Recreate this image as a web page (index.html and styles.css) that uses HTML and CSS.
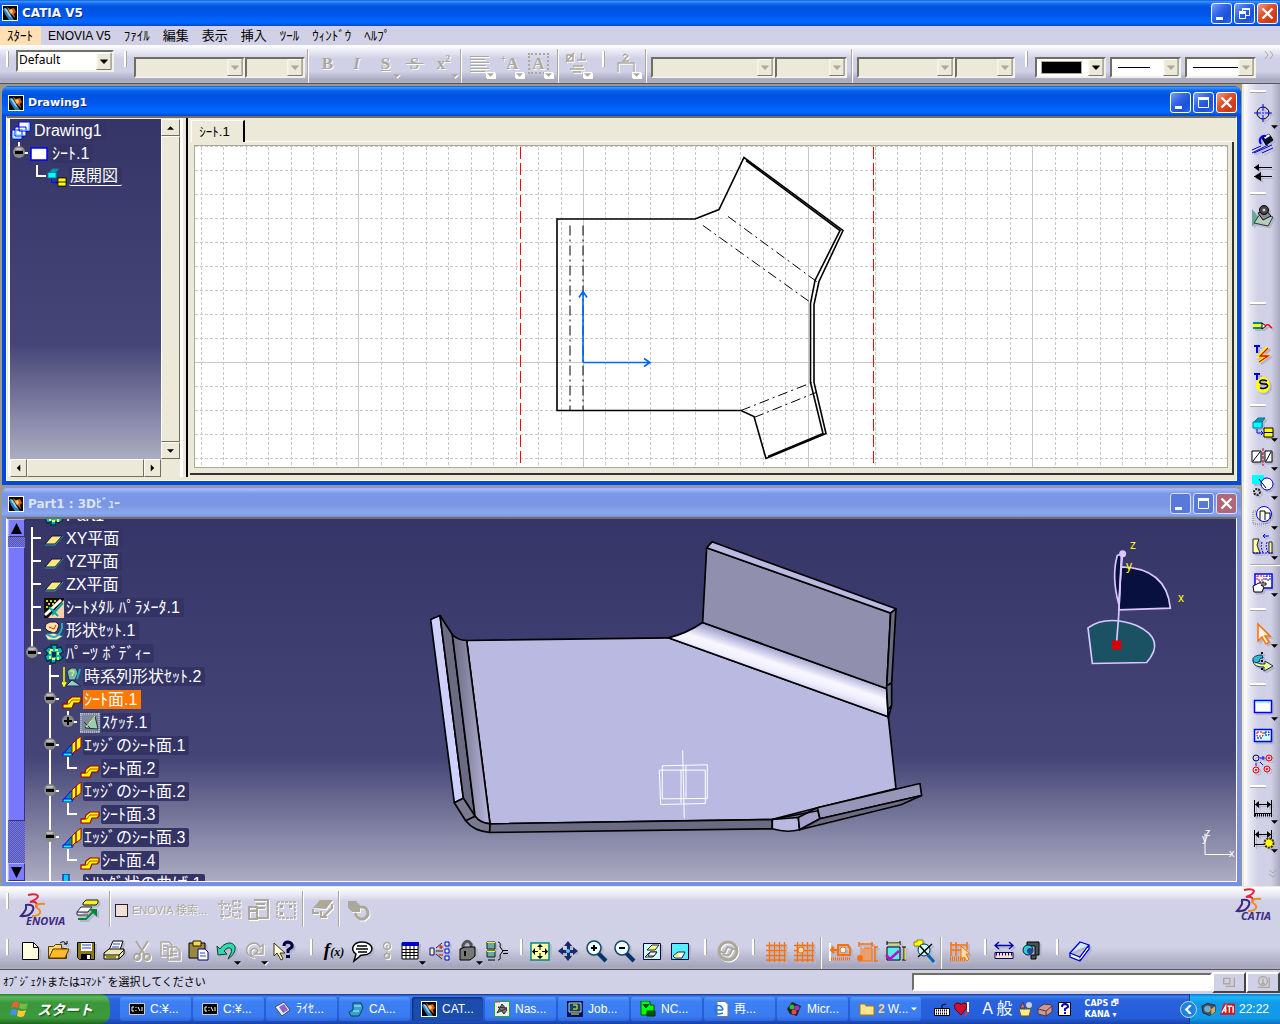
FILE: index.html
```html
<!DOCTYPE html>
<html lang="ja">
<head>
<meta charset="utf-8">
<title>CATIA V5</title>
<link rel="stylesheet" href="styles.css">
</head>
<body>
<svg class="defs" aria-hidden="true">
  <defs>
    <symbol id="app" viewBox="0 0 16 16"><path fill="#fff" d="M0 0h16v16H0z"/><path fill="#080404" d="M1 1h14v14H1z"/><path d="M1 4l3-1 8 12H7L3 9z" fill="#2a7cc8"/><path d="M2 3l3 1 5 9-3-2z" fill="#8cd8f0"/><path d="M5 2l3 2 4-1 2 4-2 2 1 4-3-3-3-3z" fill="#d06018"/><path d="M7 5l3-1 1 3-2 2z" fill="#ffc860"/></symbol>
    <symbol id="w-min" viewBox="0 0 21 21"><path fill="#fff" d="M5 14h7v3H5z"/></symbol>
    <symbol id="w-max" viewBox="0 0 21 21"><path fill="none" stroke="#fff" d="M5.500 5.500h10v10h-10z"/><path fill="#fff" d="M5 5h11v3H5z"/></symbol>
    <symbol id="w-res" viewBox="0 0 21 21"><path fill="none" stroke="#fff" d="M8.500 8V5.500h7v7H12M5.500 9.500h6v6h-6z"/><path fill="#fff" d="M8 5h8v2H8zM5 8h7v3H5z"/></symbol>
    <symbol id="w-close" viewBox="0 0 21 21"><path stroke="#fff" stroke-width="2.400" d="M5.500 5.500l10 10M15.500 5.500l-10 10"/></symbol>
    <symbol id="arrow" viewBox="0 0 16 18"><path fill="#ece9d8" d="M0 0h16v18H0z"/><path fill="none" stroke="#fff" d="M.5 18V.5H16"/><path fill="none" stroke="#716f64" d="M0 17.500h15.500V0"/><path fill="currentColor" d="M4 7h8v1H4zM5 8h6v1H5zM6 9h4v1H6zM7 10h2v1H7z"/></symbol>
    <symbol id="plane" viewBox="0 0 20 20"><path d="M1 15L8 7h10l-7 8z" fill="#ffe880" stroke="#101040"/><path d="M1 16h10l8-9" fill="none" stroke="#2a9aa8"/></symbol>
    <symbol id="sheet" viewBox="0 0 20 20"><path d="M1 18v-4h4l1-4 4-3h9v4l-2 2h-5l-2 5z" fill="#ff0" stroke="#a00000" stroke-width="1.200"/><path d="M1 14h6l3-4h9" fill="none" stroke="#a00000" stroke-width=".7"/></symbol>
    <symbol id="edge" viewBox="0 0 20 20"><path d="M1 18l8-9h2v9z" fill="#0a8a9a" stroke="#00f"/><path d="M1 17h9v3H1z" fill="#0ff" stroke="#00f"/><path d="M10 8l4-4v10l-4 4zM14 4l5-4v11l-5 4z" fill="#ff0" stroke="#a00000"/></symbol>
    <symbol id="knob-" viewBox="0 0 12 12"><circle cx="6" cy="6" r="6" fill="#888"/><path fill="#bbb" d="M2 2h8l-2 2H3z"/><path fill="#000" d="M2 5h8v3H2z"/></symbol>
    <symbol id="knob+" viewBox="0 0 12 12"><circle cx="6" cy="6" r="6" fill="#888"/><path fill="#000" d="M2 5h8v2H2zM5 2h2v8H5z"/></symbol>
    <symbol id="view" viewBox="0 0 22 22"><path d="M2 6l4-4h7l-3 4v5H2z" fill="#0a9aa8" stroke="#0074a0"/><path d="M1 6h9v6H1z" fill="#0ff" stroke="#07a"/><path d="M5 13v4h6M9 15l2 2-2 2" fill="none" stroke="#00f"/><path d="M12 12h9v9h-9z" fill="#ff0" stroke="#000"/><path d="M12 16.500h9" stroke="#000"/></symbol>
    <symbol id="drop" viewBox="0 0 8 4"><path fill="currentColor" d="M0 0h8L4 4z"/></symbol>
    <symbol id="body" viewBox="0 0 20 20"><path d="M7 1h6v3l4-1 2 5-3 2 3 4-4 3-3-1-1 3H7v-3l-4 1-2-5 3-2-3-4 4-3 3 1z" fill="#0bb" stroke="#013050" stroke-width="1.500"/><path d="M6 6h8v9H6z" fill="none" stroke="#ff4" stroke-dasharray="3 2" stroke-width="2"/><path fill="#063060" d="M8 8h4v5H8z"/></symbol>
    <symbol id="geo" viewBox="0 0 20 20"><path d="M2 3l4-2h6l3 3-2 6-3 2-6-2-3-3z" fill="#ffe0a0" stroke="#102040"/><path d="M5 6l5 2 2-4" stroke="#e22" fill="none"/><path d="M1 14l8-2 10 3-6 4H4z" fill="#ffe9a0" stroke="#1a6a90"/><path d="M3 13c6 5 12 4 15-6V2" stroke="#2ac" stroke-width="2" fill="none"/></symbol>
    <linearGradient id="bendR" gradientUnits="userSpaceOnUse" x1="1120" y1="355" x2="1082" y2="470"><stop offset="0" stop-color="#8c8ab2"/><stop offset=".22" stop-color="#b2b0d8"/><stop offset=".5" stop-color="#f8f7ff"/><stop offset=".68" stop-color="#f0efff"/><stop offset="1" stop-color="#bab9e2"/></linearGradient>
    <linearGradient id="bendL"><stop offset="0" stop-color="#6c6b84"/><stop offset=".45" stop-color="#8c8ba8"/><stop offset="1" stop-color="#bab9e2"/></linearGradient>
    <pattern id="dots" width="2" height="2" patternUnits="userSpaceOnUse"><path fill="#000030" d="M0 0h2v2H0z"/><path fill="#204070" d="M0 0h1v1H0z"/></pattern>
    <pattern id="dots2" width="2" height="2" patternUnits="userSpaceOnUse"><path fill="#2c4a66" d="M0 0h2v2H0z"/><path fill="#0a5a60" d="M0 0h1v1H0zM1 1h1v1H1z"/></pattern>
  </defs>
</svg>

<header class="title title-app">
  <svg class="title-icon"><use href="#app"/></svg>
  <h1>CATIA V5</h1>
  <span class="win-buttons">
    <button class="wb" aria-label="最小化"><svg><use href="#w-min"/></svg></button>
    <button class="wb" aria-label="元に戻す"><svg><use href="#w-res"/></svg></button>
    <button class="wb close" aria-label="閉じる"><svg><use href="#w-close"/></svg></button>
  </span>
</header>

<nav class="menu">
  <button class="hot">ｽﾀｰﾄ</button><button>ENOVIA V5</button><button>ﾌｧｲﾙ</button><button>編集</button><button>表示</button><button>挿入</button><button>ﾂｰﾙ</button><button>ｳｨﾝﾄﾞｳ</button><button>ﾍﾙﾌﾟ</button>
</nav>

<div class="bar bar-top">
  <i class="grip left"></i>
  <span class="combo w98 high"><select aria-label="スタイル"><option>Default</option></select><svg><use href="#arrow"/></svg></span>
  <i class="grip"></i>
  <span class="combo w111 off"><select aria-label="フォント" disabled></select><svg><use href="#arrow"/></svg></span>
  <span class="combo w60 off"><select aria-label="サイズ" disabled></select><svg><use href="#arrow"/></svg></span>
  <i class="sep"></i>
  <button class="tool off letter" disabled>B</button>
  <button class="tool off letter" disabled><em>I</em></button>
  <button class="tool off letter" disabled><u>S</u><svg class="tail"><use href="#drop"/></svg></button>
  <button class="tool off letter" disabled><s>&nbsp;S&nbsp;</s></button>
  <button class="tool off letter" disabled><span>x<sup>2</sup></span><svg class="tail"><use href="#drop"/></svg></button>
  <i class="sep"></i>
  <button class="tool off boxed" disabled aria-label="配置"><svg viewBox="0 0 28 28"><path stroke="currentColor" d="M4 6.500h19M4 9.500h15M4 12.500h19M4 15.500h16M4 18.500h19M4 21.500h15"/></svg><svg class="tail"><use href="#drop"/></svg></button>
  <button class="tool off boxed letter" disabled><span><sup>+</sup>A</span><svg class="tail"><use href="#drop"/></svg></button>
  <button class="tool off boxed letter" disabled><span class="frame">A</span><svg class="tail"><use href="#drop"/></svg></button>
  <i class="sep wide"></i>
  <button class="tool off boxed" disabled aria-label="記号"><svg viewBox="0 0 28 28"><path fill="none" stroke="currentColor" stroke-width="1.500" d="M4 5h6v6H4zM3 12l8-9M14 10h9M18.500 3v7M10 16h10M7 19h14M10 22h8"/></svg><svg class="tail"><use href="#drop"/></svg></button>
  <i class="grip"></i>
  <button class="tool off boxed" disabled aria-label="寸法"><svg viewBox="0 0 28 28"><path fill="none" stroke="currentColor" stroke-width="1.300" d="M6 22v-9h16v9M11 6l2-2 3 2-5 5h6"/></svg><svg class="tail"><use href="#drop"/></svg></button>
  <i class="sep wide"></i>
  <span class="combo w124 off"><select aria-label="寸法タイプ" disabled></select><svg><use href="#arrow"/></svg></span>
  <span class="combo w72 off"><select aria-label="公差" disabled></select><svg><use href="#arrow"/></svg></span>
  <i class="sep wide"></i>
  <span class="combo w98 off"><select aria-label="精度" disabled></select><svg><use href="#arrow"/></svg></span>
  <span class="combo w60 off"><select aria-label="単位" disabled></select><svg><use href="#arrow"/></svg></span>
  <i class="grip"></i>
  <span class="combo w71 pen"><select aria-label="色"></select><b class="swatch"></b><svg><use href="#arrow"/></svg></span>
  <span class="combo w71 pen off"><select aria-label="線の太さ"></select><b class="rule"></b><svg><use href="#arrow"/></svg></span>
  <span class="combo w71 pen off"><select aria-label="線種"></select><b class="rule long"></b><svg><use href="#arrow"/></svg></span>
  <button class="more" aria-label="その他"><svg viewBox="0 0 10 8"><path d="M1 0l3 4-3 4M6 0l3 4-3 4" fill="none" stroke="#aca899"/></svg></button>
</div>

<main class="work">
 <div class="mdi">
  <section class="win">
    <header class="title">
      <svg class="title-icon"><use href="#app"/></svg>
      <h2>Drawing1</h2>
      <span class="win-buttons">
        <button class="wb" aria-label="最小化"><svg><use href="#w-min"/></svg></button>
        <button class="wb" aria-label="最大化"><svg><use href="#w-max"/></svg></button>
        <button class="wb close" aria-label="閉じる"><svg><use href="#w-close"/></svg></button>
      </span>
    </header>
    <div class="client">
      <aside class="side">
        <ul class="tree tree-a">
          <li><svg class="ico" viewBox="0 0 20 20"><path d="M1 9h10v9H1zM4 6h11v9H4zM8 1h11v9H8z" fill="#fff" stroke="#00f"/><path d="M2 11v6h8M5 8v6h8M9 9h9V2" stroke="#4cf" fill="none"/></svg><span>Drawing1</span></li>
          <li><i class="half"><svg><use href="#knob-"/></svg></i><svg class="ico" viewBox="0 0 20 20"><path d="M2 4h16v12H2z" fill="#fff" stroke="#00f" stroke-width="1.500"/></svg><span>ｼｰﾄ.1</span></li>
          <li><i class="none"></i><i class="half"></i><svg class="ico"><use href="#view"/></svg><span class="act">展開図</span></li>
        </ul>
        <div class="vbar"><button aria-label="上へ"><svg viewBox="0 0 8 4"><path d="M0 4l4-4 4 4z"/></svg></button><i class="thumb"></i><button aria-label="下へ"><svg viewBox="0 0 8 4"><path d="M0 0l4 4 4-4z"/></svg></button></div>
        <div class="hbar"><button aria-label="左へ"><svg viewBox="0 0 8 8"><path d="M6 0L2 4l4 4z"/></svg></button><i class="thumb"></i><button aria-label="右へ"><svg viewBox="0 0 8 8"><path d="M2 0l4 4-4 4z"/></svg></button></div>
      </aside>
      <i class="splitter"></i>
      <div class="sheet">
        <div class="tabs"><button class="tab">ｼｰﾄ.1</button></div>
        <div class="paper">
          <svg class="drawing" viewBox="195 147 1033 321" preserveAspectRatio="xMidYMid slice">
            <g transform="translate(.5 .5)" fill="none">
              <path stroke="#c8c8c8" stroke-dasharray="3 2" shape-rendering="crispEdges" d="M201 147V468M223 147V468M246 147V468M268 147V468M291 147V468M313 147V468M336 147V468M381 147V468M403 147V468M426 147V468M448 147V468M471 147V468M493 147V468M516 147V468M538 147V468M561 147V468M605 147V468M628 147V468M650 147V468M673 147V468M695 147V468M718 147V468M740 147V468M763 147V468M785 147V468M830 147V468M853 147V468M875 147V468M897 147V468M920 147V468M942 147V468M965 147V468M987 147V468M1010 147V468M1055 147V468M1077 147V468M1100 147V468M1122 147V468M1145 147V468M1167 147V468M1190 147V468M1212 147V468M195 147H1228M195 171H1228M195 195H1228M195 219H1228M195 243H1228M195 267H1228M195 291H1228M195 315H1228M195 339H1228M195 387H1228M195 411H1228M195 435H1228M195 459H1228"/>
              <path stroke="#c8c8c8" shape-rendering="crispEdges" d="M358 147V468M583 147V468M808 147V468M1032 147V468M195 363H1228"/>
              <path stroke="#f00" shape-rendering="crispEdges" stroke-dasharray="12 4" d="M520 147V468M873 147V468"/>
              <path stroke="#000" stroke-dasharray="10 4 2 4" d="M570 226V411M583 226V411M728 217L818 283M703 226L812 304M741 411L812 383M754 418L816 393"/>
              <path stroke="#000" stroke-width="1.600" d="M557 219.500H695L719 210L744 158L843 231L819 282L814 305V383L826 434L766 459L754 417L741 411H557Z"/>
              <path stroke="#000" stroke-width="1.600" d="M746 161L840 231L815 281L810.500 304V383L823 434L768 457"/>
              <path stroke="#06f" stroke-width="1.600" d="M583 363V292M579 298l4-6 4 6M583 363H650M644 359l6 4-6 4"/>
            </g>
          </svg>
        </div>
      </div>
    </div>
  </section>

  <section class="win idle">
    <header class="title">
      <svg class="title-icon"><use href="#app"/></svg>
      <h2>Part1 : 3Dﾋﾞｭｰ</h2>
      <span class="win-buttons">
        <button class="wb" aria-label="最小化"><svg><use href="#w-min"/></svg></button>
        <button class="wb" aria-label="最大化"><svg><use href="#w-max"/></svg></button>
        <button class="wb close" aria-label="閉じる"><svg><use href="#w-close"/></svg></button>
      </span>
    </header>
    <div class="client">
      <div class="pbar"><button aria-label="上へ"><svg viewBox="0 0 10 10"><path d="M0 10L5 0l5 10z"/></svg></button><i class="dither"></i><i class="thumb"></i><i class="dither tall"></i><button aria-label="下へ"><svg viewBox="0 0 10 10"><path d="M0 0l5 10 5-10z"/></svg></button></div>
      <div class="scene">
        <svg class="model" viewBox="25 519 1211 363" preserveAspectRatio="xMidYMid slice">
          <g transform="translate(420 530) scale(.3333)" stroke="#000" stroke-width="5" stroke-linejoin="round">
            <path fill="#bab9e2" d="M140 333L745 325 1405 562 1428 777 1192 835 1055 870 210 883z"/>
            <path fill="url(#bendR)" d="M745 325Q800 312 848 279L1400 477 1405 562z"/>
            <path fill="#918fae" d="M860 55L1412 250 1400 477 848 279z"/>
            <path fill="#bab9e2" d="M860 55l16-18L1428 238l-16 13z"/>
            <path fill="#6c6b84" d="M1412 251l16-13-13 225 0 65-10 38-5-89z"/>
            <path fill="none" d="M1402 468l13-8M1405 540l10-12"/>
            <path fill="#d0d0ff" d="M32 270l28-12 70 548-27 14z"/>
            <path fill="#6c6b84" d="M60 258L97 315 165 860 130 806z"/>
            <path fill="url(#bendL)" d="M97 315Q112 332 140 333L210 883Q180 880 165 860z"/>
            <path fill="#7a7990" d="M103 820l27-14 35 54q15 20 45 23l-1 26q-48-4-72-35z"/>
            <path fill="none" d="M137 874l28-14"/>
            <path fill="#6c6b84" d="M210 883L1057 870v28L209 909z"/>
            <path fill="#bab9e2" d="M1057 870l78-6 4 37q-40 10-82-3z"/>
            <path fill="#a3a2cc" d="M1135 864l57-29 8 33-61 33z"/>
            <path fill="#9896b8" d="M1192 835L1500 762l5 36-305 70z"/>
            <path fill="#6c6b84" d="M1139 901l61-33 305-70-62 28z"/>
            <path fill="none" stroke-width="4" d="M1057 870l140-27"/>
          </g>
          <g transform="translate(420 530) scale(.3333)" stroke="#fff" stroke-width="3" fill="none">
            <path d="M727 709l135-3v101l-135 1zM718 722h138v100l-134 3zM788 663l5 203M783 720v100M798 710v95"/>
          </g>
          <g transform="translate(1040 520) scale(.3333)" stroke="#dcc8ff" stroke-width="5">
            <path fill="url(#dots)" d="M242 142Q380 145 391 266L237 271z"/>
            <path fill="url(#dots)" d="M248 103l-16 5q-18 62 4 145l8-110z"/>
            <path fill="url(#dots2)" d="M144 325Q200 285 290 318 380 360 320 429L157 432z"/>
            <path fill="none" d="M244 110l-8 180-6 75"/><circle cx="248" cy="103" r="8" fill="#dcc8ff"/>
            <path fill="#d00" stroke="none" d="M216 363h28v27h-28z"/>
          </g>
          <g class="axis"><text x="1130" y="549">z</text><text x="1126" y="570">y</text><text x="1178" y="602">x</text></g>
          <path d="M1205 834v21h26" fill="none" stroke="#fff"/>
          <g class="axis white"><text x="1205" y="836">z</text><text x="1202" y="842">y</text><text x="1229" y="857">x</text></g>
        </svg>
        <ul class="tree tree-b">
          <li><i class="half"></i><svg class="ico"><use href="#body"/></svg><span>Part1</span></li>
          <li><i class="tee"></i><svg class="ico"><use href="#plane"/></svg><span>XY平面</span></li>
          <li><i class="tee"></i><svg class="ico"><use href="#plane"/></svg><span>YZ平面</span></li>
          <li><i class="tee"></i><svg class="ico"><use href="#plane"/></svg><span>ZX平面</span></li>
          <li><i class="tee"></i><svg class="ico" viewBox="0 0 20 20"><path fill="#101008" d="M0 0h20v20H0z"/><path fill="#cc2" d="M2 2h2v2H2zM6 2h2v2H6zM10 2h2v2h-2zM4 5h2v2H4zM8 5h2v2H8zM2 8h2v2H2z"/><path fill="#ffd0b0" d="M20 2v18H4z"/><path d="M1 17L17 2" stroke="#fff" stroke-width="3"/><path d="M5 9l9 9M8 17L19 5" stroke="#0aa" stroke-width="2"/></svg><span>ｼｰﾄﾒﾀﾙ ﾊﾟﾗﾒｰﾀ.1</span></li>
          <li><i class="tee"></i><svg class="ico"><use href="#geo"/></svg><span>形状ｾｯﾄ.1</span></li>
          <li><i class="half"><svg><use href="#knob-"/></svg></i><svg class="ico"><use href="#body"/></svg><span>ﾊﾟｰﾂ ﾎﾞﾃﾞｨｰ</span></li>
          <li><i class="none"></i><i class="tee"></i><svg class="ico" viewBox="0 0 20 20"><path d="M2 0v18M0 15l2 4 2-4" stroke="#ff0" stroke-width="1.500" fill="none"/><path d="M5 4l4-3h5l2 5-3 7H7z" fill="#7ab8b0" stroke="#134"/><path d="M8 4h4l-2 5" stroke="#ff4" fill="none"/><path d="M4 19l6-6 9 6z" fill="#9cc" stroke="#134"/><path d="M18 2l-3 10" stroke="#2ac" stroke-width="2"/></svg><span>時系列形状ｾｯﾄ.2</span></li>
          <li><i class="none"></i><i class="tee"><svg><use href="#knob-"/></svg></i><svg class="ico"><use href="#sheet"/></svg><span class="sel">ｼｰﾄ面.1</span></li>
          <li><i class="none"></i><i class="line"></i><i class="half"><svg><use href="#knob+"/></svg></i><svg class="ico" viewBox="0 0 20 20"><path fill="#8088a0" d="M0 0h20v20H0z"/><path stroke="#dde" stroke-dasharray="1 1" d="M0 1h20M0 19h20M1 0v20M19 0v20"/><path d="M5 15L15 3l3 13zM4 9l6 6" fill="#9cb" stroke="#233"/><path d="M6 14l9-11" stroke="#ff6"/></svg><span>ｽｹｯﾁ.1</span></li>
          <li><i class="none"></i><i class="tee"><svg><use href="#knob-"/></svg></i><svg class="ico"><use href="#edge"/></svg><span>ｴｯｼﾞのｼｰﾄ面.1</span></li>
          <li><i class="none"></i><i class="line"></i><i class="half"></i><svg class="ico"><use href="#sheet"/></svg><span>ｼｰﾄ面.2</span></li>
          <li><i class="none"></i><i class="tee"><svg><use href="#knob-"/></svg></i><svg class="ico"><use href="#edge"/></svg><span>ｴｯｼﾞのｼｰﾄ面.2</span></li>
          <li><i class="none"></i><i class="line"></i><i class="half"></i><svg class="ico"><use href="#sheet"/></svg><span>ｼｰﾄ面.3</span></li>
          <li><i class="none"></i><i class="tee"><svg><use href="#knob-"/></svg></i><svg class="ico"><use href="#edge"/></svg><span>ｴｯｼﾞのｼｰﾄ面.3</span></li>
          <li><i class="none"></i><i class="line"></i><i class="half"></i><svg class="ico"><use href="#sheet"/></svg><span>ｼｰﾄ面.4</span></li>
          <li><i class="none"></i><i class="tee"></i><svg class="ico" viewBox="0 0 20 20"><path d="M1 0h6v14H1z" fill="#0cf" stroke="#00a"/></svg><span>ｼﾘﾝﾀﾞ状の曲げ.1</span></li>
        </ul>
      </div>
    </div>
  </section>
 </div>

 <div class="palette">
  <i class="hgrip"></i>
  <button class="tool" aria-label="基準点"><svg viewBox="0 0 28 28"><circle cx="13" cy="13" r="6" fill="none" stroke="#000"/><path stroke="#00f" d="M13 4v7M13 15v7M4 13h7M15 13h7M12 13h2"/><use href="#drop" x="21" y="25" width="7" height="4"/></svg></button>
  <button class="tool" aria-label="ハッチング"><svg viewBox="0 0 28 28"><path d="M12 9l7-4 4 6-7 5z" fill="#013" stroke="#000"/><path d="M14 8l5-3 1 2-5 3z" fill="#fff"/><path d="M11 15c-3-4 0-9 5-8" stroke="#00f" stroke-width="2" fill="none"/><path stroke="#00c" d="M2 21l9-4M4 24l18-8M12 24l11-5M2 24l16-8"/></svg></button>
  <button class="tool" aria-label="矢印"><svg viewBox="0 0 28 28"><path stroke="#000" d="M4 9.500h18M4 18.500h18"/><path d="M9 6v7L4 9.500zM11 14v9l-7-4.500z"/></svg></button>
  <i class="hgrip"></i>
  <button class="tool" aria-label="カタログ"><svg viewBox="0 0 28 28"><path fill="#6ba898" d="M2 7l7 9-7 9z"/><path d="M4 21l6-9 13 3-5 9z" fill="#b8ccbc" stroke="#243c34"/><path d="M8 11l8-3 5 6-8 4z" fill="#889" stroke="#111"/><circle cx="14" cy="8" r="4.500" fill="#444" stroke="#000"/><circle cx="14" cy="8" r="1.500" fill="#ccc"/></svg></button>
  <i class="room"></i>
  <i class="hgrip"></i>
  <button class="tool" aria-label="ワイヤ"><svg viewBox="0 0 28 28"><path fill="#088" d="M3 10h9v7H3z"/><path fill="#ff0" d="M3 12h9v3H3z"/><path fill="#fff" stroke="#000" d="M12 11l4 3-4 3z"/><path d="M15 14c4-3 4 0 7 2" stroke="#f00" stroke-width="1.500" fill="none"/></svg></button>
  <button class="tool" aria-label="テキスト"><svg viewBox="0 0 28 28"><path stroke="#00c" stroke-width="2" d="M4 5h6M7 5v7"/><path d="M18 6l-9 9h8l-8 6" fill="none" stroke="#ff0" stroke-width="3"/><path d="M18 7l-8 8h8l-9 6" fill="none" stroke="#e00" stroke-width="1.300"/></svg></button>
  <button class="tool" aria-label="注記"><svg viewBox="0 0 28 28"><path stroke="#00c" stroke-width="2" d="M4 4h6M7 4v6"/><ellipse cx="13" cy="15" rx="5" ry="6" fill="none" stroke="#ff0" stroke-width="4"/><path d="M17 11c-8-3-10 3-3 3s3 6-4 4M17 14h-5" stroke="#000" stroke-width="1.500" fill="none"/></svg></button>
  <i class="hgrip"></i>
  <button class="tool" aria-label="正面図"><svg viewBox="0 0 28 28"><use href="#view" x="2" y="2" width="22" height="22"/><use href="#drop" x="21" y="24" width="7" height="4"/></svg></button>
  <button class="tool" aria-label="断面図"><svg viewBox="0 0 28 28"><path d="M2 8h9v11H2zM15 8h7v11h-7z" fill="#fff" stroke="#000"/><path d="M3 18l7-9M16 18l5-9" stroke="#000"/><path stroke="#a00" stroke-dasharray="3 1" d="M13 5v18"/><use href="#drop" x="21" y="24" width="7" height="4"/></svg></button>
  <button class="tool" aria-label="詳細図"><svg viewBox="0 0 28 28"><path fill="#0ff" d="M2 3h12v9H2z"/><circle cx="17" cy="12" r="6" fill="#fff" stroke="#00c"/><path stroke="#000" d="M9 7l7 9"/><circle cx="7" cy="20" r="3" fill="none" stroke="#222" stroke-width="2" stroke-dasharray="2 1"/><use href="#drop" x="21" y="24" width="7" height="4"/></svg></button>
  <button class="tool" aria-label="クリッピング"><svg viewBox="0 0 28 28"><path stroke="#777" stroke-dasharray="1 1" fill="none" d="M3 10h14v13H3z"/><circle cx="14" cy="13" r="7.500" fill="#fff" stroke="#00f"/><path d="M10 19v-9h5v9M15 12h5v6" stroke="#000" fill="none"/><use href="#drop" x="21" y="25" width="7" height="4"/></svg></button>
  <button class="tool" aria-label="破断図"><svg viewBox="0 0 28 28"><path d="M3 9h6l-2 6 3 8H3zM22 12h-3v11h3z" fill="#ffa" stroke="#222"/><path d="M12 12l-1 5 2 6M17 12l-1 5 2 6M3 23h20" stroke="#00f" stroke-dasharray="2 1" fill="none"/><path d="M19 6h-6M15 4l-2 2 2 2" stroke="#00f" fill="none"/><use href="#drop" x="21" y="26" width="7" height="4"/></svg></button>
  <i class="hsep"></i>
  <button class="tool" aria-label="ビュー作成"><svg viewBox="0 0 28 28"><path d="M5 5h17v14H5z" fill="#fff" stroke="#00f" stroke-width="1.500"/><path d="M7 7h7v4H7z" fill="none" stroke="#e00" stroke-dasharray="2 1"/><path d="M16 7h4v4h-4zM9 13h5" fill="none" stroke="#00c" stroke-dasharray="2 1"/><path d="M3 17l6-3h7v2h-5l3 2-2 5H4z" fill="#fff" stroke="#000"/><use href="#drop" x="21" y="24" width="7" height="4"/></svg></button>
  <i class="hgrip far"></i>
  <button class="tool" aria-label="選択"><svg viewBox="0 0 28 28"><path d="M8 4v17l4-4 4 7 3-2-4-6h5z" fill="#fff4e8" stroke="#ff7000" stroke-width="1.500"/><use href="#drop" x="21" y="24" width="7" height="4"/></svg></button>
  <button class="tool" aria-label="回転"><svg viewBox="0 0 28 28"><path stroke="#000" stroke-width="2" stroke-dasharray="2 2" d="M12 3v20"/><path d="M3 11c0 6 5 7 11 7v4l9-5-8-5v3h-4c-4-1-6-2-8-4z" fill="#ff8" stroke="#036"/><path d="M12 6c-9 0-12 5-6 8l4-2c-1-2 0-3 3-3z" fill="#3bc" stroke="#036"/></svg></button>
  <i class="hgrip"></i>
  <button class="tool" aria-label="新規シート"><svg viewBox="0 0 28 28"><path d="M4.500 7.500h17v12h-17z" fill="#fff" stroke="#00f" stroke-width="1.500"/><path d="M6 9h14" stroke="#4ef"/><use href="#drop" x="21" y="24" width="7" height="4"/></svg></button>
  <button class="tool" aria-label="新規ビュー"><svg viewBox="0 0 28 28"><path d="M4.500 7.500h17v12h-17z" fill="#cff" stroke="#00f" stroke-width="1.500"/><path d="M7 10h6v4H7z" fill="#fff" stroke="#e00" stroke-dasharray="2 1"/><path d="M15 10h4v3h-4zM7 16h6" fill="none" stroke="#00c" stroke-dasharray="2 1"/></svg></button>
  <button class="tool" aria-label="インスタンス"><svg viewBox="0 0 28 28"><g fill="none"><circle cx="6" cy="7" r="3" stroke="#006"/><circle cx="19" cy="7" r="3" stroke="#e00"/><circle cx="6" cy="19" r="3" stroke="#e00"/><circle cx="17" cy="18" r="3" stroke="#e00"/><path stroke="#00f" d="M10 7h5M13 5v4M6 12v3M10 11l3 3"/></g><g fill="#e00"><circle cx="19" cy="7" r="1"/><circle cx="6" cy="19" r="1"/><circle cx="17" cy="18" r="1"/></g></svg></button>
  <i class="hgrip"></i>
  <button class="tool" aria-label="寸法"><svg viewBox="0 0 28 28"><path d="M4.500 5v17M21.500 5v17M5 9.500h16M5 18.500h17" stroke="#000" fill="none"/><path d="M9 6v7L5 9.500zM17 6v7l4-3.500z"/><path stroke="#000" stroke-dasharray="1 1" stroke-width="3" d="M5 20h16"/><use href="#drop" x="21" y="25" width="7" height="4"/></svg></button>
  <button class="tool" aria-label="自動寸法"><svg viewBox="0 0 28 28"><path d="M4.500 6v17M21.500 6v10M5 10.500h16M5 20.500h10" stroke="#000" fill="none"/><path d="M9 7v7l-4-3.500zM17 7v7l4-3.500z"/><circle cx="19" cy="19" r="4.500" fill="#ff0" stroke="#430" stroke-dasharray="2 1" stroke-width="2"/><use href="#drop" x="21" y="25" width="7" height="4"/></svg></button>
  <button class="more down" aria-label="その他"><svg viewBox="0 0 10 8"><path d="M1 0l4 3 4-3M1 4l4 3 4-3" fill="none" stroke="#aaa"/></svg></button>
 </div>
</main>

<div class="dock">
 <div class="bar row1">
  <i class="grip left"></i>
  <svg class="brand" viewBox="0 0 52 36"><path d="M12 3q8-2 10 1 0 3-8 6 9-1 6 5" fill="none" stroke="#e0243c" stroke-width="2"/><path d="M10 13q9-1 7 5-3 7-12 6 3-3 5-7z" fill="none" stroke="#3c2a80" stroke-width="2"/><path d="M29 12q-9-1-9 3 5 3 4 6-1 3-8 3" fill="none" stroke="#f08c20" stroke-width="2"/><text x="10" y="33">ENOVIA</text></svg>
  <button class="tool" aria-label="接続"><svg viewBox="0 0 28 28"><path d="M9 7l3-3h12v3l-2 2H9z" fill="#ee3" stroke="#220"/><path d="M3 16l4-5h11l-4 5zM3 16v3h11" fill="#fff" stroke="#223"/><path d="M4 23h8l9-9" stroke="#083" stroke-width="2" fill="none"/><path d="M15 13h8v8z" fill="#083"/></svg></button>
  <i class="sep"></i>
  <label class="find"><input type="checkbox" disabled><span>ENOVIA 検索...</span></label>
  <button class="tool off" disabled aria-label="構造"><svg viewBox="0 0 28 28"><path fill="none" stroke="currentColor" stroke-width="1.300" d="M6 4v20M2 8h12M4 20h10v-8H9M17 5h7v5h-7zM17 15h7v6h-7z" stroke-dasharray="4 1"/></svg></button>
  <button class="tool off" disabled aria-label="保存"><svg viewBox="0 0 28 28"><path fill="none" stroke="currentColor" stroke-width="2" d="M10 4h14v18H14M12 8h9M13 12h8M5 11h8v12H5zM5 15h8"/></svg></button>
  <button class="tool off" disabled aria-label="一覧"><svg viewBox="0 0 28 28"><path fill="none" stroke="currentColor" stroke-width="1.500" d="M5 6h18v16H5z" stroke-dasharray="3 1"/><path fill="currentColor" d="M8 9h3v3H8zM17 9h3v3h-3zM8 16h3v3H8z"/></svg></button>
  <i class="sep"></i>
  <button class="tool off" disabled aria-label="送信"><svg viewBox="0 0 28 28"><path d="M5 12l7-8h13l-7 9z" fill="currentColor"/><path d="M5 13v4h6M24 8v4l-9 9M19 21h-6v-6" stroke="currentColor" stroke-width="2" fill="none"/></svg></button>
  <i class="sep"></i>
  <button class="tool off" disabled aria-label="部品"><svg viewBox="0 0 28 28"><path d="M4 5h8l4 4v7H8l-4-4z" fill="currentColor"/><path d="M16 11c8-1 11 8 4 12h-4c-3-2-5-4-4-6" fill="none" stroke="currentColor" stroke-width="3"/></svg></button>
  <svg class="brand end" viewBox="0 0 52 36"><path d="M16 3q8-2 10 1 0 3-8 6 9-1 6 5" fill="none" stroke="#e0243c" stroke-width="2"/><path d="M14 13q9-1 7 5-3 7-12 6 3-3 5-7z" fill="none" stroke="#3c2a80" stroke-width="2"/><path d="M33 12q-9-1-9 3 5 3 4 6-1 3-8 3" fill="none" stroke="#f08c20" stroke-width="2"/><text x="13" y="33">CATIA</text></svg>
 </div>
 <div class="bar row2">
  <i class="grip left"></i>
  <button class="tool" aria-label="新規"><svg viewBox="0 0 28 28"><path d="M6.500 5.500h11l5 5v12h-16z" fill="#ffffe0" stroke="#000"/><path d="M17.500 5.500v5h5" fill="none" stroke="#000"/></svg></button>
  <button class="tool" aria-label="開く"><svg viewBox="0 0 28 28"><path d="M4.500 9.500h5l2-2h6v4h5v10h-18z" fill="#ffdc60" stroke="#543800"/><path d="M5 21l4-9h16l-4 9z" fill="#ffb828" stroke="#543800"/><path d="M16 6q4-3 6 1M20 7h3V4" stroke="#000" fill="none"/></svg></button>
  <button class="tool" aria-label="保存"><svg viewBox="0 0 28 28"><path d="M5.500 5.500h17v17h-15l-2-2z" fill="#887818" stroke="#000"/><path fill="#fff" d="M9 6h11v8H9z"/><path d="M10 8h9M10 11h9" stroke="#24c"/><path d="M9 17h10v5H9z"/><path fill="#fff" d="M15 18h3v4h-3z"/></svg></button>
  <button class="tool" aria-label="印刷"><svg viewBox="0 0 28 28"><path d="M9 13l4-9h10l-3 9z" fill="#fff" stroke="#000"/><path d="M13 7h7M12 10h7" stroke="#24c"/><path d="M4 16l5-4h15v5l-5 5H4z" fill="#eee8b0" stroke="#000"/><path d="M4 18h15l5-5M19 18v4" stroke="#000" fill="none"/><path stroke="#998c20" stroke-width="2" d="M6 20h10"/></svg></button>
  <button class="tool off" disabled aria-label="切り取り"><svg viewBox="0 0 28 28"><path fill="none" stroke="currentColor" stroke-width="2" d="M8 4l9 14M20 4l-9 14"/><circle cx="9" cy="20" r="3" fill="none" stroke="currentColor" stroke-width="2"/><circle cx="19" cy="20" r="3" fill="none" stroke="currentColor" stroke-width="2"/></svg></button>
  <button class="tool off" disabled aria-label="コピー"><svg viewBox="0 0 28 28"><path fill="none" stroke="currentColor" stroke-width="1.500" d="M5 5h8l3 3v11H5zM12 10h8l4 4v9H12zM7 9h5M7 12h4M14 15h7M14 18h7"/></svg></button>
  <button class="tool" aria-label="貼り付け"><svg viewBox="0 0 28 28"><path d="M5 6h16v15H5z" fill="#988840" stroke="#000"/><path d="M9 4h8v5H9z" fill="#ffd84c" stroke="#220"/><path d="M14 12h7l3 3v8H14z" fill="#fff" stroke="#000080"/><path d="M16 16h5M16 19h6" stroke="#24c"/></svg></button>
  <button class="tool" aria-label="元に戻す"><svg viewBox="0 0 28 28"><path d="M5 9l1 9 9-1-3-3c4-5 9-4 7 2l-3 6c8-5 10-15 2-16-5 0-8 3-10 6z" fill="#30d8b0" stroke="#04402c"/><use href="#drop" x="22" y="24" width="7" height="4"/></svg></button>
  <button class="tool off" disabled aria-label="やり直し"><svg viewBox="0 0 28 28"><path d="M23 8v9h-8l3-3c-5-6-10 0-5 6-9-2-8-13 1-14 3 0 5 2 6 4z" fill="none" stroke="currentColor" stroke-width="1.500"/><use href="#drop" x="21" y="24" width="7" height="4" color="#000"/></svg></button>
  <button class="tool" aria-label="ヘルプ"><svg viewBox="0 0 28 28"><path d="M6 6v13l3-3 4 7 2-1-3-6h5z" fill="#ffd" stroke="#430"/><path d="M16 9q0-4 4-4 5 1 4 5l-4 3v3" fill="none" stroke="#004" stroke-width="3"/><path fill="#004" d="M18 18h4v3h-4z"/></svg></button>
  <i class="grip wide"></i>
  <button class="tool fx">f<small>(x)</small></button>
  <button class="tool" aria-label="コメント"><svg viewBox="0 0 28 28"><path d="M14 5c13 0 13 13 1 13-2 0-3 0-4 2l-5 4 2-7c-7-5-2-12 6-12z" fill="#fff" stroke="#000" stroke-width="1.500"/><path stroke="#000" stroke-width="1.500" d="M9 9h10M8 12h12M10 15h9"/></svg></button>
  <button class="tool off slim" disabled aria-label="チェック"><svg viewBox="0 0 28 28"><circle cx="14" cy="9" r="3.500" fill="none" stroke="currentColor" stroke-width="1.500"/><path stroke="currentColor" d="M14 8v8"/><circle cx="14" cy="19" r="2.500" fill="none" stroke="currentColor" stroke-width="1.500"/></svg></button>
  <button class="tool" aria-label="設計テーブル"><svg viewBox="0 0 28 28"><path d="M4 6h16v16H4z" fill="#fff" stroke="#000"/><path fill="#00c" d="M4 5h17v4H4z"/><path stroke="#000" d="M8 9v13M12 9v13M16 9v13M4 12.500h16M4 15.500h16M4 18.500h16"/><use href="#drop" x="21" y="24" width="7" height="4"/></svg></button>
  <button class="tool" aria-label="関係"><svg viewBox="0 0 28 28"><path d="M4 11h4v7H4z" fill="#ff8" stroke="#00a"/><g fill="#cff" stroke="#00c"><path d="M19 5h4v4h-4zM19 12h4v4h-4zM19 19h4v4h-4z"/></g><path d="M10 14h7M10 11l6-5M10 17l6 5" stroke="#222"/><path stroke="#d00" d="M13 10h4M15 8v4M13 18h4"/></svg></button>
  <button class="tool" aria-label="ロック"><svg viewBox="0 0 28 28"><path d="M9 12V8q4-7 8-1v5" fill="none" stroke="#555" stroke-width="3"/><path d="M6 12l5-2h10v9l-5 4H6z" fill="#777" stroke="#000"/><path stroke="#000" stroke-width="2" d="M11 14v5"/><use href="#drop" x="22" y="24" width="7" height="4"/></svg></button>
  <button class="tool" aria-label="等価寸法"><svg viewBox="0 0 28 28"><path d="M5 5h8v7H5zM5 14h8v6H5z" fill="#6aa" stroke="#121"/><path stroke="#ff0" d="M5 5.500h8M5 14.500h8"/><path d="M16 5q3 0 2 5l3 4-3 4q1 5-2 5M21 13.500h5M21 16.500h5M6 23h7" fill="none" stroke="#000"/></svg></button>
  <i class="grip narrow"></i>
  <button class="tool" aria-label="全体表示"><svg viewBox="0 0 28 28"><path d="M5 6h18v17H5z" fill="#ffa" stroke="#088" stroke-width="1.500"/><path stroke="#000" d="M14 8v5M14 16v5M7 14.500h5M16 14.500h5"/><path d="M11 10h6l-3-3zM11 19h6l-3 3zM9 11v7l-3-3.500zM19 11v7l3-3.500z"/></svg></button>
  <button class="tool" aria-label="移動"><svg viewBox="0 0 28 28"><g fill="#18286c"><path d="M10 9h8l-4-5zM10 19h8l-4 5zM9 10v8l-5-4zM19 10v8l5-4z"/><path d="M13 8h3v12h-3zM8 13h12v3H8z"/></g><circle cx="14" cy="14" r="2" fill="#5cf"/></svg></button>
  <button class="tool" aria-label="拡大"><svg viewBox="0 0 28 28"><path d="M16 16l8 8" stroke="#036" stroke-width="4"/><circle cx="12" cy="11" r="7" fill="#eff" stroke="#146" stroke-width="1.500"/><path stroke="#000" stroke-width="2" d="M9 11h6M12 8v6"/></svg></button>
  <button class="tool" aria-label="縮小"><svg viewBox="0 0 28 28"><path d="M16 16l8 8" stroke="#036" stroke-width="4"/><circle cx="12" cy="11" r="7" fill="#eff" stroke="#146" stroke-width="1.500"/><path stroke="#000" stroke-width="2" d="M9 11h6"/></svg></button>
  <button class="tool" aria-label="垂直表示"><svg viewBox="0 0 28 28"><path d="M5.500 6.500h17v16h-17z" fill="#cff" stroke="#104"/><path d="M9 13l5-5h7l-4 5zM7 20l5-5h7l-4 5z" fill="#ff8" stroke="#223"/><path fill="#fff" stroke="#223" d="M12 15h7l-3 4h-6z"/></svg></button>
  <button class="tool" aria-label="表示モード"><svg viewBox="0 0 28 28"><path d="M5.500 6.500h17v16h-17z" fill="#5ef" stroke="#104"/><path d="M7 19l5-4h7l-3 6H9z" fill="#fff" stroke="#223"/><path fill="#ee4" d="M8 19l4-3 1 4z"/></svg></button>
  <i class="grip"></i>
  <button class="tool off" disabled aria-label="更新"><svg viewBox="0 0 28 28"><circle cx="14" cy="14" r="9" fill="none" stroke="currentColor" stroke-width="3"/><path d="M6 14q5 4 6-1t7-1M9 17q6 4 8-2t5-1" fill="none" stroke="currentColor" stroke-width="2"/></svg></button>
  <i class="grip"></i>
  <button class="tool" aria-label="グリッド"><svg viewBox="0 0 28 28"><path stroke="#ff7000" stroke-width="1.300" d="M7.500 5v20M12.500 5v20M17.500 5v20M22.500 5v20M4 8.500h20M4 13.500h20M4 18.500h20M4 23h20"/></svg></button>
  <button class="tool" aria-label="スナップ"><svg viewBox="0 0 28 28"><path stroke="#ff7000" stroke-width="1.300" d="M7.500 5v20M12.500 5v20M17.500 5v20M22.500 5v20M4 8.500h20M4 13.500h20M4 18.500h20M4 23h20"/><circle cx="11" cy="13" r="3" fill="#fda" stroke="#ff7000"/></svg></button>
  <i class="sep"></i>
  <button class="tool" aria-label="解析表示"><svg viewBox="0 0 28 28"><path stroke="#fff" stroke-width="2" d="M4 6v18"/><path d="M5 13h8M8 10l-3 3 3 3M12 8h10l2 4v6H12z" fill="none" stroke="#ff7000" stroke-width="2"/><circle cx="17" cy="13" r="3" fill="#fff" stroke="#ff7000"/><path stroke="#ff7000" stroke-dasharray="1 1" stroke-width="3" d="M5 22h20"/></svg></button>
  <button class="tool" aria-label="拘束表示"><svg viewBox="0 0 28 28"><path d="M5 5v5M18 5v5M5 7h14M21 10v14M20 10h4M20 24h4" stroke="#ff7000" stroke-width="1.500" fill="none"/><path fill="#e8a070" d="M6 11h12v13H6z"/><path d="M4 24h15M10 11h8v12" fill="none" stroke="#ff7000"/><circle cx="6" cy="21" r="3" fill="#ff7000"/></svg></button>
  <button class="tool" aria-label="寸法検査"><svg viewBox="0 0 28 28"><path d="M5 10h13v13H5z" fill="#5ee" stroke="#000"/><path d="M5 4v4M18 4v4M5 6h13M20 10h4M22 10v13M20 23h4" stroke="#000" fill="none"/><path stroke="#ee0" d="M6 7h12M23 11v12"/><path d="M4 18l4 4 9-8" stroke="#c0c" stroke-width="2.500" fill="none"/></svg></button>
  <button class="tool" aria-label="形状検査"><svg viewBox="0 0 28 28"><path d="M7 3h6v5h5v6H9V9H4V5h3z" fill="#ff0" stroke="#880"/><circle cx="14" cy="13" r="6" fill="#cff" stroke="#036"/><path d="M8 20L22 7M10 9l8 9" stroke="#000" stroke-width="1.500"/><path d="M18 18l6 7" stroke="#06a" stroke-width="3"/></svg></button>
  <i class="sep"></i>
  <button class="tool" aria-label="寸法選択"><svg viewBox="0 0 28 28"><path d="M5 5v14M21 5v8M5 8h16M5 13h10M10 5v14" stroke="#ff7000" stroke-width="1.500" fill="none"/><path stroke="#ff7000" stroke-dasharray="1 1" stroke-width="5" d="M4 22h16"/><path d="M15 9v13l3-2 3 4 2-2-3-5h4z" fill="#fda" stroke="#ff7000"/></svg></button>
  <i class="grip narrow"></i>
  <button class="tool" aria-label="測定"><svg viewBox="0 0 28 28"><path d="M5 8.500h18M9 5L5 8.500 9 12M19 5l4 3.500-4 3.500" stroke="#00a" fill="none" stroke-width="1.300"/><path d="M5 15.500h18v6H5z" fill="#fdc" stroke="#006"/><path stroke="#006" stroke-dasharray="1 2" stroke-width="3" d="M6 17h16"/></svg></button>
  <button class="tool" aria-label="慣性測定"><svg viewBox="0 0 28 28"><path d="M9 5h12v13h-3v4h-5v-4h4V9H9z" fill="#455" stroke="#000"/><circle cx="10" cy="13" r="5" fill="#3cc" stroke="#024"/><circle cx="12" cy="14" r="3" fill="#249"/></svg></button>
  <i class="grip"></i>
  <button class="tool" aria-label="カタログ"><svg viewBox="0 0 28 28"><path d="M4 16l10-11 9 3-9 12zM4 16v4l10 4 9-12V8M14 20v4" fill="#cef" stroke="#00c" stroke-width="1.300"/><path d="M5 18l9 4 8-11" stroke="#fff" fill="none"/></svg></button>
 </div>
</div>

<div class="status">
  <label for="cmd">ｵﾌﾞｼﾞｪｸﾄまたはｺﾏﾝﾄﾞを選択してください</label>
  <input id="cmd" type="text">
  <button aria-label="ウィンドウ"><svg viewBox="0 0 18 14"><path d="M3 3h7v6H3zM5 12h10V2" fill="none" stroke="#aca899" stroke-width="1.500"/></svg></button>
  <button aria-label="情報"><svg viewBox="0 0 18 14"><circle cx="9" cy="6" r="5" fill="none" stroke="#aca899" stroke-width="1.500"/><path fill="none" stroke="#aca899" stroke-width="1.500" d="M9 3v6M7 9h4M3 13h13V2"/></svg></button>
</div>

<footer class="task">
  <button class="start"><svg viewBox="0 0 20 18"><path d="M3 3q4-3 6 0L8 8Q5 6 1 8z" fill="#f06030"/><path d="M10 3q4 2 8 0l-2 6q-3 1-7-1z" fill="#70c040"/><path d="M1 10q3-2 6 0l-1 6q-3-2-6-1z" fill="#4090f0"/><path d="M8 10q4 2 8 0l-2 6q-3 2-7 0z" fill="#ffc830"/></svg>スタート</button>
  <div class="apps">
    <button><svg viewBox="0 0 16 16"><path fill="#000" stroke="#ccc" d="M.5 2.500h15v11H.5z"/><path stroke="#fff" fill="none" d="M5 6H3v4h2M7 6v1M7 9v1M9 6l2 4M13 6v4"/></svg>C:¥...</button>
    <button><svg viewBox="0 0 16 16"><path fill="#000" stroke="#ccc" d="M.5 2.500h15v11H.5z"/><path stroke="#fff" fill="none" d="M5 6H3v4h2M7 6v1M7 9v1M9 6l2 4M13 6v4"/></svg>C:¥...</button>
    <button><svg viewBox="0 0 16 16"><path d="M0 6l9-5 6 8-8 6z" fill="#eef" stroke="#446"/><path d="M4 6l5-3 4 6-5 3z" fill="#86c"/></svg>ﾗｲｾ...</button>
    <button><svg viewBox="0 0 16 16"><path d="M5 2h8l2 5-4 8H3l-2-4 4-2z" fill="#38a0d0" stroke="#045"/><path stroke="#bef" d="M6 5h7M5 10h6"/></svg>CA...</button>
    <button class="on"><svg><use href="#app"/></svg>CAT...</button>
    <button><svg viewBox="0 0 16 16"><path fill="#eee" stroke="#2a2" d="M.5.5h15v15H.5z"/><path d="M3 12l5-9 5 6-3 4-6-7 9 1z" fill="#777" stroke="#333"/><path stroke="#e33" d="M1 1h5"/></svg>Nas...</button>
    <button><svg viewBox="0 0 16 16"><path fill="#001060" d="M0 0h16v16H0z"/><path fill="#146" stroke="#ccc" d="M2 2h12v9H2z"/><path stroke="#ff0" fill="none" d="M6 4h4v4H6M4 13h8"/></svg>Job...</button>
    <button><svg viewBox="0 0 16 16"><path fill="#0f0" stroke="#050" d="M1 0h9v4h4v10H1z"/><path d="M3 3l3 4 3-4M7 10h8v5H7z" fill="#050" stroke="#031"/></svg>NC...</button>
    <button><svg viewBox="0 0 16 16"><path fill="#fff" stroke="#777" d="M4 .5h8l3 3v12H4z"/><path d="M10 9H2q1-5 4-4.500T10 9M2 9q1 6 8 3" fill="none" stroke="#27d" stroke-width="1.600"/></svg>再...</button>
    <button><svg viewBox="0 0 16 16"><path d="M1 8l5-7 9 4-4 10-7-2z" fill="#222"/><circle cx="6" cy="6" r="2.500" fill="#3b3"/><circle cx="11" cy="7" r="2.500" fill="#93c"/><circle cx="8" cy="11" r="2.500" fill="#e44"/></svg>Micr...</button>
    <button class="group"><svg viewBox="0 0 16 16"><path d="M1 3h5l1 2h8v9H1z" fill="#ffe48c" stroke="#a70"/></svg><b>2</b>W...<svg class="mini"><use href="#drop"/></svg></button>
  </div>
  <div class="lang">
    <svg viewBox="0 0 16 16"><path fill="#fff" stroke="#000" d="M.5 7.500h15v7H.5z"/><path stroke="#000" stroke-dasharray="1 1" stroke-width="2" d="M2 9.500h12M2 12.500h12"/><path d="M8 7V4l4-1" stroke="#000" fill="none"/></svg>
    <svg viewBox="0 0 16 16"><path d="M7 14L1 8q-2-6 3-6 3 0 3 2 1-2 4-2 3 2 1 6z" fill="#d01030" stroke="#600"/><path stroke="#fff" stroke-width="2" d="M14 1v10"/><path stroke="#e33" stroke-width="2" d="M14 11l-3 4"/></svg>
    <span>A 般</span>
    <svg viewBox="0 0 16 16"><path d="M2 8h12l-2 7H4z" fill="#fe8" stroke="#652"/><path d="M3 7l3-6 2 6zM9 7l5-5" fill="#e66" stroke="#345"/><circle cx="12" cy="4" r="3" fill="#ccd"/></svg>
    <svg viewBox="0 0 16 16"><path d="M1 7l6-4 8 1v7l-6 4-8-2z" fill="#c99" stroke="#533"/><path d="M1 8l8 2 6-5M9 10v5" stroke="#533" fill="none"/></svg>
    <svg viewBox="0 0 16 16"><path fill="#ffe" stroke="#000" d="M1.500 1.500h12v13h-12z"/><path d="M5 6q0-3 3-3t3 3l-3 2v2M8 11v2" fill="none" stroke="#00c" stroke-width="2"/></svg>
    <span class="caps"><small>CAPS 🗗</small><small>KANA ▾</small></span>
  </div>
  <div class="tray">
    <button class="chev" aria-label="隠す"><svg viewBox="0 0 8 8"><path d="M6 0L2 4l4 4" fill="none" stroke="#fff" stroke-width="2"/></svg></button>
    <svg viewBox="0 0 16 16"><path d="M1 5l6-3 8 2v7l-6 4-7-3z" fill="#456" stroke="#223"/><circle cx="7" cy="8" r="3.500" fill="#7ab"/><path d="M11 8l4-3v6l-4 3z" fill="#da4"/></svg>
    <svg viewBox="0 0 16 16"><path fill="#d8141c" d="M4 2h12v12H0z"/><path d="M2 12l4-7v7M4 10h3M8 5h5M10 5v7M14 5v7" stroke="#fff" stroke-width="1.500" fill="none"/></svg>
    <time>22:22</time>
  </div>
</footer>
</body>
</html>
```

FILE: styles.css
```css
* { box-sizing: border-box; }
body {
  margin: 0;
  min-height: 100vh;
  display: flex;
  flex-direction: column;
  background: #d0d0e6;
  color: #000;
  font: 13px/16px "Liberation Sans", "Noto Sans CJK JP", sans-serif;
  overflow-x: hidden;
}
button { font: inherit; color: inherit; }
.defs { position: absolute; width: 0; height: 0; }
svg { display: block; }

/* title bars */
.title {
  display: flex;
  align-items: center;
  gap: 4px;
  flex: none;
  height: 30px;
  padding: 3px 3px 0 4px;
  background: linear-gradient(#0a4fd0, #3d96ff 5%, #0a62ee 16%, #0053e1 30%, #0056ea 55%, #0066ff 78%, #0066ff 88%, #0045c4);
  color: #fff;
}
.title-app { height: 26px; padding: 0 2px; }
.title h1, .title h2 {
  margin: 0;
  flex: 1;
  font: bold 12px/16px "DejaVu Sans", "Noto Sans CJK JP", sans-serif;
  text-shadow: 1px 1px 0 #0a2a7a;
}
.title h2 { font-size: 11px; }
.title-icon { width: 16px; height: 16px; }
.win-buttons { display: flex; gap: 2px; }
.wb {
  width: 21px;
  height: 21px;
  padding: 0;
  border: 1px solid #fff;
  border-radius: 3px;
  background: linear-gradient(135deg, #7ba0f4, #3065e8 40%, #1c50d8 70%, #2a66f0);
}
.wb svg { width: 21px; height: 21px; margin: -1px; }
.wb.close { background: linear-gradient(135deg, #f0a088, #e0502c 40%, #c83a14 80%, #d85028); }

/* menu */
.menu { display: flex; flex: none; height: 19px; background: #d0d0e6; }
.menu button { border: 0; padding: 0 6px 0 7px; background: none; white-space: nowrap; font-size: 13px; line-height: 18px; }
.menu .hot { background: #ffe0b4; padding-right: 8px; }
.menu button:nth-child(2) { font-size: 12px; }

/* tool bars */
.bar { display: flex; align-items: center; flex: none; overflow: hidden; }
.bar-top {
  height: 39px;
  border-bottom: 1px solid #555;
  background: linear-gradient(#fff, #e4e4f2 20%, #d0d0e6 36%, #d0d0e6 70%, #a8a8c0 92%, #b0b0c4);
}
.grip, .sep { flex: none; width: 20px; align-self: stretch; background: linear-gradient(90deg, #fff 1px, #fff 2px, #aca899 2px, #aca899 3px, transparent 3px) 10px 6px / 10px 16px no-repeat; }
.grip.left { width: 16px; background-position-x: 6px; }
.grip.narrow { width: 16px; }
.grip.wide { width: 24px; background-position-x: 14px; }
.sep { width: 8px; background: linear-gradient(90deg, #aca899 1px, #fff 1px, #fff 2px, transparent 2px) 2px 4px / 6px 100% no-repeat; }
.sep.wide { width: 10px; }
.bar-top .sep.wide { background-position-x: 4px; }

.combo { display: grid; flex: none; height: 21px; align-self: flex-end; margin-bottom: 5px; }
.combo.high { align-self: flex-start; margin: 5px 0 0; height: 22px; }
.combo > * { grid-area: 1 / 1; }
.combo select {
  appearance: none;
  width: 100%;
  height: 100%;
  padding: 0 1px 3px;
  border: 2px solid;
  border-color: #716f64 #f4f2e8 #f4f2e8 #716f64;
  border-radius: 0;
  background: #fff;
  color: #000;
  opacity: 1;
  font: 12px/14px "Noto Sans", sans-serif;
}
.combo.off select:disabled { background: #ece9d8; }
.combo svg { width: 16px; height: 17px; justify-self: end; align-self: center; margin-right: 2px; pointer-events: none; }
.combo.off svg { color: #aca899; }
.pen { margin-right: 4px; }
.swatch { width: 41px; height: 13px; margin-left: 6px; align-self: center; background: #000; border: 1px solid #aca899; pointer-events: none; }
.rule { width: 32px; height: 1px; margin-left: 8px; align-self: center; background: #000; pointer-events: none; }
.rule.long { width: 45px; }
.w60 { width: 60px; }
.w71 { width: 71px; }
.w72 { width: 72px; }
.w98 { width: 98px; }
.w111 { width: 111px; }
.w124 { width: 124px; }

.tool { position: relative; flex: none; width: 28px; height: 28px; padding: 0; border: 0; background: none; }
.tool > svg { width: 28px; height: 28px; overflow: visible; filter: drop-shadow(2px 2px 0 #b4b4cc); }
.tool.off { color: #aca899; }
.tool.off > svg { filter: drop-shadow(1px 1px 0 #fff); }
.tool.slim { width: 22px; }
.tool.slim > svg { margin-left: -3px; }
.bar-top .tool { width: 29px; }
.tool > .tail { position: absolute; right: 0; bottom: 0; width: 7px; height: 4px; }
.boxed > .tail { bottom: 0; width: 9px; height: 6px; padding: 1px; background: #fff; }
.letter { font: bold 17px/24px "Liberation Serif", serif; text-shadow: 1px 1px 0 #fff; }
.letter sup { font-size: 10px; line-height: 0; }
.frame { display: inline-block; width: 21px; height: 21px; line-height: 17px; border: 2px dotted #aca899; }
.fx { font: italic bold 19px/24px "Liberation Serif", serif; }
.fx small { font-size: 12px; }
.more { width: 14px; height: 12px; margin: 4px 0 0 4px; padding: 0; border: 0; background: none; align-self: flex-start; }
.more svg { width: 10px; height: 8px; }

/* work area */
.work { display: flex; flex: 1 0 auto; background: #aca899; }
.mdi { display: flex; flex-direction: column; flex: 1; min-width: 0; gap: 2px; padding: 2px 1px 0 2px; background: #9c9a90; }
.win {
  display: flex;
  flex-direction: column;
  flex: 1 0 398px;
  padding: 0 4px 4px;
  border-radius: 8px 8px 0 0;
  background: #0048e0;
  overflow: hidden;
}
.win > .title { margin: 0 -4px; padding-left: 6px; padding-right: 4px; }
.idle { background: #7a8ee4; }
.idle > .title { background: linear-gradient(#7088dc, #a8bcf8 6%, #7a98e8 22%, #7b96e1 60%, #88a8f0 88%, #7a90dc); color: #d8e4f8; }
.idle h2 { font-size: 12px; text-shadow: none; }
.idle .wb { background: #5878dc; border-color: #d8e0f8; }
.idle .close { background: #b06878; }
.client { display: flex; flex: 1 1 0; min-height: 0; border: 1px solid #fff; border-top: 2px solid #716f64; background: #ece9d8; }

.side { display: grid; flex: none; width: 172px; grid-template: minmax(0, 1fr) 18px / 1fr 19px; margin: 1px 0 3px 1px; border-left: 2px solid #fff; }
.tree { margin: 0; padding: 0; list-style: none; overflow: hidden; color: #fff; font-size: 16px; line-height: 19px; }
.tree-a { background: linear-gradient(#353568, #454577 66%, #acacc2); }
.tree li { display: flex; align-items: center; height: 23px; white-space: nowrap; }
.tree i { display: grid; place-items: center; flex: none; width: 18px; height: 23px; background-repeat: no-repeat; }
.tree i svg { width: 12px; height: 12px; margin-top: -4px; }
.tree .tee, .tree .line { background-image: linear-gradient(#fff, #fff), linear-gradient(#fff, #fff); background-size: 2px 100%, 12px 2px; background-position: 8px 0, 8px 10px; }
.tree .line { background-size: 2px 100%, 0 0; }
.tree .half { background-image: linear-gradient(#fff, #fff), linear-gradient(#fff, #fff); background-size: 2px 12px, 10px 2px; background-position: 8px 0, 8px 10px; }
.tree .ico { flex: none; width: 20px; height: 20px; margin: 0 1px 0 3px; }
.tree span { padding: 0 4px 0 1px; border-radius: 2px; background: #333366; }
.tree .sel { background: #ff7800; border-radius: 0; }
.tree .act { line-height: 18px; border-bottom: 1px solid #fff; }
.tree-a .ico { margin: 0 2px 0 1px; }
.vbar, .hbar { display: flex; background: #f6f4ec; }
.vbar { flex-direction: column; }
.vbar button, .hbar button, .side .thumb { border: 1px solid; border-color: #fff #716f64 #716f64 #fff; background: #ece9d8; }
.vbar button { height: 17px; padding: 0 5px; flex: none; }
.hbar button { width: 17px; padding: 0 4px; flex: none; }
.vbar svg { width: 7px; height: 4px; }
.hbar svg { width: 7px; height: 8px; }
.side .thumb { flex: 1; }
.splitter { flex: none; width: 8px; border-left: 3px solid #fff; border-right: 2px solid #000; margin-bottom: 3px; }
.sheet { display: flex; flex-direction: column; flex: 1; min-width: 0; padding: 0 2px 5px; }
.tabs { display: flex; height: 24px; padding: 2px 0 0 1px; border-bottom: 1px solid #fff; }
.tab { width: 54px; height: 22px; padding: 0 6px 0 0; border: 1px solid #fff; border-right: 2px solid #000; border-bottom: 0; background: #ece9d8; font-size: 13px; line-height: 16px; }
.paper { display: flex; flex: 1; min-height: 0; padding: 3px 4px 5px; border-right: 2px solid #333; border-bottom: 2px solid #333; }
.drawing { flex: 1 1 0; width: 0; min-height: 0; border: 1px solid #aca899; background: #fff; }

.pbar { display: flex; flex-direction: column; flex: none; width: 17px; margin-left: 1px; background: #333366; }
.pbar button { height: 18px; padding: 0 2px; border: 1px solid; border-color: #b0b0ff #33337a #33337a #b0b0ff; background: #7c7cff; flex: none; }
.pbar svg { width: 11px; height: 11px; }
.pbar .thumb { flex: 1; border: 1px solid; border-color: #b0b0ff #33337a #33337a #b0b0ff; background: #7878ff; }
.dither { height: 10px; background: conic-gradient(#7878ff 25%, #555599 0 50%, #7878ff 0 75%, #555599 0) 0 0 / 2px 2px; }
.dither.tall { height: 42px; }
.scene { display: grid; flex: 1; grid-template: minmax(0, 1fr) / minmax(0, 1fr); min-height: 0; overflow: hidden; background: linear-gradient(#353568, #454577 66%, #acacc2); }
.scene > * { grid-area: 1 / 1; }
.model { width: 100%; height: 100%; }
.tree-b { height: 391px; margin: -15px 0 0 -2px; z-index: 1; }
.axis { fill: #ff0; font-size: 12px; }
.axis.white { fill: #fff; font-size: 11px; }

.palette {
  display: flex;
  flex-direction: column;
  flex: none;
  width: 38px;
  padding-left: 6px;
  border-left: 2px solid #ece9d8;
  background: linear-gradient(90deg, #fff, #e4e4f2 18%, #d0d0e6 40%, #d0d0e6 75%, #a8a8c0);
}
.palette .tool { height: 29px; }
.hgrip { flex: none; height: 15px; background: linear-gradient(#fff 2px, #aca899 2px, #aca899 3px, transparent 3px) 0 6px / 16px 4px no-repeat; }
.hgrip.far { height: 22px; background-position-y: 11px; }
.hsep { flex: none; height: 10px; background: linear-gradient(#aca899 1px, #fff 1px, #fff 2px, transparent 2px) 0 6px / 100% 3px no-repeat; }
.room { flex: none; height: 66px; }
.more.down { margin: 16px 0 0 18px; }

/* bottom bars */
.dock { flex: none; border-top: 1px solid #ece9d8; border-bottom: 1px solid #555; background: linear-gradient(#fff, #e8e8f4 8px, #d0d0e6 14px, #d0d0e6 60px, #a4a4bc 80px, #b0b0c4); }
.row1 { height: 46px; }
.row2 { height: 36px; }
.row1 .sep { background-size: 6px 36px; }
.brand { flex: none; width: 52px; height: 36px; overflow: visible; }
.brand text { font: italic bold 11px "Open Sans", sans-serif; fill: #3c2a80; }
.row1 .tool { margin: 0 5px 0 6px; }
.row1 .find ~ .tool { margin: 0; }
.brand.end { margin: -10px 0 0 auto; }
.find { display: flex; align-items: center; gap: 4px; width: 101px; color: #aca899; font-size: 11px; white-space: nowrap; text-shadow: 1px 1px 0 #fff; }
.find input { appearance: none; width: 13px; height: 13px; margin: 0; border: 1px solid #222; background: #f0e0d8; }

/* status line */
.status { display: flex; align-items: center; flex: none; height: 24px; padding-left: 3px; background: #d0d0e6; font-size: 11px; }
.status label { flex: 1; }
.status input { width: 300px; height: 18px; padding: 0 3px; border: 2px solid; border-color: #716f64 #fff #fff #716f64; background: #fff; }
.status button { width: 34px; height: 21px; padding: 0 7px; border: 2px solid; border-color: #fff #444 #444 #fff; background: #d0d0e6; }
.status svg { width: 16px; height: 14px; }

/* task bar */
.task { display: flex; flex: none; height: 30px; background: linear-gradient(#1f2f86, #3a80f0 8%, #2a62dc 20%, #245edb 80%, #1941a5); color: #fff; font-size: 12px; }
.start { display: flex; align-items: center; gap: 7px; width: 110px; padding: 0 10px; border: 0; border-radius: 0 10px 10px 0; background: linear-gradient(#2a7a2a, #5cb85c 10%, #3c963c 30%, #3c9a3c 80%, #1e661e); font: italic bold 14px/20px "Noto Sans CJK JP", sans-serif; text-shadow: 1px 1px 1px #124a12; white-space: nowrap; }
.start svg { flex: none; width: 20px; height: 18px; }
.apps { display: flex; gap: 2px; padding: 3px 0 3px 10px; }
.apps button { display: flex; align-items: center; gap: 5px; width: 71px; height: 24px; padding: 0 0 0 9px; border: 0; border-radius: 3px; background: linear-gradient(#5c98ff, #3c80f4 20%, #3a7cf0 80%, #2c66d8); white-space: nowrap; overflow: hidden; }
.apps .on { background: #1c4cac; box-shadow: inset 1px 1px 2px #0c2c74; }
.apps svg { flex: none; width: 16px; height: 16px; }
.apps .group { gap: 3px; }
.apps .mini { width: 6px; height: 4px; }
.apps b { color: #ffd080; }
.lang { display: flex; align-items: center; gap: 4px; margin-left: auto; font-size: 16px; }
.lang svg { width: 16px; height: 16px; }
.lang > span { margin-left: 8px; }
.caps { display: grid; }
.caps small { font: bold 8px/11px "DejaVu Sans", sans-serif; }
.tray { display: flex; align-items: center; gap: 4px; width: 91px; margin-left: 70px; padding-right: 12px; border-left: 1px solid #0c3c94; background: linear-gradient(#0c78d8, #1cb4f4 10%, #129aea 30%, #129aea 80%, #0c70c0); }
.tray svg { flex: none; width: 15px; height: 16px; }
.chev { flex: none; width: 17px; height: 17px; margin-left: -10px; padding: 0 3px; border: 1px solid #bde; border-radius: 50%; background: #2080e8; }
.chev svg { width: 9px; height: 9px; }
```
